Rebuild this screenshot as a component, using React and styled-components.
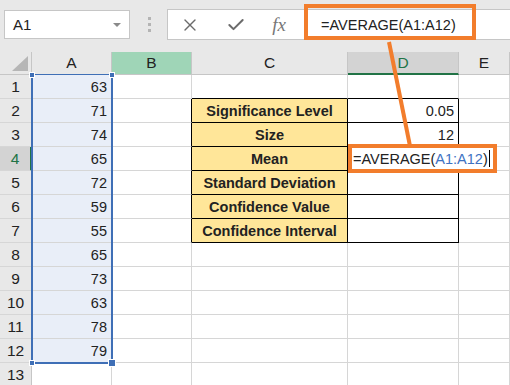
import React from 'react'
import styled, { createGlobalStyle } from 'styled-components'
import { X, Check } from 'lucide-react'

const ORANGE = '#f27d2c'
const GREEN = '#217346'
const GRID = '#d6d6d6'
const BLUE = '#3f6fb6'

const values = [63, 71, 74, 65, 72, 59, 55, 65, 73, 63, 78, 79]
const stats = {
  2: ['Significance Level', '0.05'],
  3: ['Size', '12'],
  4: ['Mean', null],
  5: ['Standard Deviation', ''],
  6: ['Confidence Value', ''],
  7: ['Confidence Interval', '']
}
const columns = ['A', 'B', 'C', 'D', 'E']

const Formula = () => (
  <>
    =AVERAGE(<Ref>A1:A12</Ref>)
  </>
)

const App = () => {
  const renderToolbar = () => (
    <Toolbar>
      <NameBox>
        A1
        <Caret />
      </NameBox>
      <Grip>
        <i /><i /><i />
      </Grip>
      <FormulaBox>
        <BarIcon $w={44}><X size={20} strokeWidth={1.6} /></BarIcon>
        <BarIcon $w={48}><Check size={20} strokeWidth={2.4} /></BarIcon>
        <Fx>fx</Fx>
        <FormulaText>
          <FormulaFrame />
          =AVERAGE(A1:A12)
        </FormulaText>
      </FormulaBox>
    </Toolbar>
  )

  const renderHeader = () => (
    <>
      <Corner><Triangle /></Corner>
      {columns.map(c => (
        <ColHead key={c} $variant={c === 'B' ? 'green' : c === 'D' ? 'active' : ''}>{c}</ColHead>
      ))}
    </>
  )

  const renderRow = (r) => {
    const inTable = r >= 2 && r <= 7
    const tableTop = r === 1
    const stat = stats[r]
    return (
      <React.Fragment key={r}>
        <RowHead $active={r === 4}>{r}</RowHead>
        <Cell $bg={r <= 12 ? '#e9eef8' : '#fff'} $align="right">{values[r - 1]}</Cell>
        <Cell $rb={inTable ? '#000' : GRID} />
        <Cell
          $bg={inTable ? '#ffe699' : '#fff'}
          $rb={inTable ? '#000' : GRID}
          $bb={inTable || tableTop ? '#000' : GRID}
          $align="center"
          $bold
        >
          {stat && stat[0]}
        </Cell>
        <Cell
          $rb={inTable ? '#000' : GRID}
          $bb={inTable || tableTop ? '#000' : GRID}
          $align="right"
        >
          {stat && stat[1] !== null && stat[1]}
          {stat && stat[1] === null && (
            <Callout>
              <Formula />
              <Cursor />
            </Callout>
          )}
        </Cell>
        <Cell />
      </React.Fragment>
    )
  }

  return (
    <Page>
      <GlobalStyle />
      {renderToolbar()}
      <Sheet>
        {renderHeader()}
        {[...Array(13)].map((_, i) => renderRow(i + 1))}
        <Selection>
          <Handle $x="left" $y="top" />
          <Handle $x="right" $y="top" />
          <Handle $x="left" $y="bottom" />
          <Handle $x="right" $y="bottom" $big />
        </Selection>
      </Sheet>
      <Pointer width="510" height="385">
        <line x1="389" y1="42" x2="410" y2="146" stroke={ORANGE} strokeWidth="4" />
      </Pointer>
    </Page>
  )
}

const GlobalStyle = createGlobalStyle`
  body {
    margin: 0;
    overflow: hidden;
    background: #fff;
  }
`
const Page = styled.div`
  position: relative;
  width: 510px;
  height: 385px;
  overflow: hidden;
  font-family: "Liberation Sans", Arial, sans-serif;
  color: #222;
`
const Toolbar = styled.div`
  display: flex;
  align-items: center;
  height: 52px;
  padding: 0 0 3px 4px;
  box-sizing: border-box;
  background: #e8e8e8;
`
const NameBox = styled.div`
  position: relative;
  display: flex;
  align-items: center;
  width: 126px;
  height: 29px;
  padding-left: 8px;
  box-sizing: border-box;
  background: #fff;
  border: 1px solid #c6c6c6;
  font-size: 15px;
`
const Caret = styled.span`
  position: absolute;
  right: 8px;
  top: 12px;
  border-left: 4px solid transparent;
  border-right: 4px solid transparent;
  border-top: 4px solid #8a8a8a;
`
const Grip = styled.div`
  display: flex;
  flex-direction: column;
  gap: 3px;
  margin: 0 16px 0 18px;
  i {
    width: 3px;
    height: 3px;
    background: #b4b4b4;
  }
`
const FormulaBox = styled.div`
  display: flex;
  align-items: center;
  flex: 1;
  height: 29px;
  margin-right: -2px;
  background: #fff;
  border: 1px solid #c6c6c6;
`
const BarIcon = styled.span`
  display: flex;
  justify-content: center;
  width: ${p => p.$w}px;
  color: #6b6b6b;
`
const Fx = styled.span`
  width: 38px;
  text-align: center;
  font-family: "Liberation Serif", serif;
  font-style: italic;
  font-size: 19px;
  color: #777;
`
const FormulaText = styled.div`
  position: relative;
  margin-left: 23px;
  font-size: 14.5px;
  white-space: nowrap;
`
const FormulaFrame = styled.span`
  position: absolute;
  left: -17px;
  top: -13px;
  width: 172px;
  height: 36px;
  box-sizing: border-box;
  border: 4px solid ${ORANGE};
`
const Sheet = styled.div`
  position: relative;
  display: grid;
  grid-template-columns: 32px 80px 80px 156px 111px 51px;
  grid-template-rows: 23px;
  grid-auto-rows: 24px;
`
const Corner = styled.div`
  position: relative;
  background: #e8e8e8;
  border-right: 1px solid #c6c6c6;
  border-bottom: 1px solid #c6c6c6;
`
const Triangle = styled.span`
  position: absolute;
  left: 12px;
  bottom: 3px;
  border-left: 16px solid transparent;
  border-bottom: 15px solid #b6b6b6;
`
const ColHead = styled.div`
  display: flex;
  align-items: center;
  justify-content: center;
  box-sizing: border-box;
  font-size: 15.5px;
  background: ${p => (p.$variant === 'green' ? '#9fd5b7' : p.$variant === 'active' ? '#d3d3d3' : '#e8e8e8')};
  color: ${p => (p.$variant === 'active' ? GREEN : '#222')};
  border-right: 1px solid #c6c6c6;
  border-bottom: ${p => (p.$variant === 'active' ? `2px solid ${GREEN}` : '1px solid #c6c6c6')};
`
const RowHead = styled.div`
  display: flex;
  align-items: center;
  justify-content: center;
  box-sizing: border-box;
  font-size: 15.5px;
  background: ${p => (p.$active ? '#d3d3d3' : '#e8e8e8')};
  color: ${p => (p.$active ? GREEN : '#222')};
  border-right: ${p => (p.$active ? `2px solid ${GREEN}` : '1px solid #c6c6c6')};
  border-bottom: 1px solid ${GRID};
`
const Cell = styled.div`
  position: relative;
  display: flex;
  align-items: center;
  justify-content: ${p => (p.$align === 'right' ? 'flex-end' : p.$align === 'center' ? 'center' : 'flex-start')};
  padding: 0 4px;
  box-sizing: border-box;
  font-size: 14.5px;
  font-weight: ${p => (p.$bold ? 700 : 400)};
  white-space: nowrap;
  background: ${p => p.$bg || '#fff'};
  border-right: 1px solid ${p => p.$rb || GRID};
  border-bottom: 1px solid ${p => p.$bb || GRID};
`
const Callout = styled.div`
  position: absolute;
  z-index: 2;
  left: 0;
  top: -3px;
  display: flex;
  align-items: center;
  width: 149px;
  height: 29px;
  padding-left: 1px;
  box-sizing: border-box;
  background: #fff;
  border: 4px solid ${ORANGE};
  font-size: 14.5px;
  font-weight: 400;
`
const Ref = styled.span`
  color: #3d72c2;
`
const Cursor = styled.span`
  width: 1px;
  height: 17px;
  margin-left: 1px;
  background: #000;
`
const Selection = styled.div`
  position: absolute;
  left: 31px;
  top: 22px;
  width: 82px;
  height: 290px;
  box-sizing: border-box;
  border: 2px solid ${BLUE};
  border-top-width: 1px;
  pointer-events: none;
`
const Handle = styled.span`
  position: absolute;
  width: ${p => (p.$big ? 6 : 4)}px;
  height: ${p => (p.$big ? 6 : 4)}px;
  background: ${BLUE};
  border: 1px solid #fff;
  ${p => (p.$x === 'left' ? 'left: -4px;' : `right: ${p.$big ? -5 : -4}px;`)}
  ${p => (p.$y === 'top' ? 'top: -3px;' : `bottom: ${p.$big ? -5 : -4}px;`)}
`
const Pointer = styled.svg`
  position: absolute;
  left: 0;
  top: 0;
  z-index: 3;
  pointer-events: none;
`

export default App
